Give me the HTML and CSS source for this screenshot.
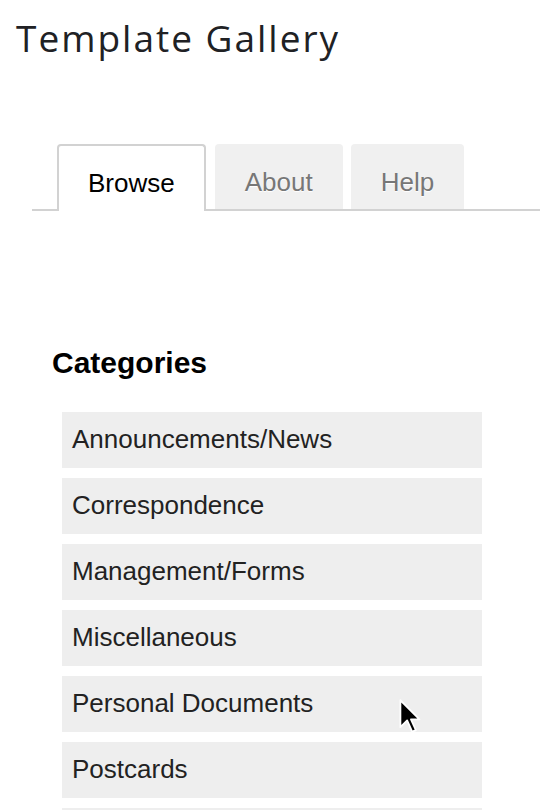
FILE: index.html
```html
<!DOCTYPE html>
<html lang="en">
<head>
    <meta charset="UTF-8">
    <meta name="viewport" content="width=device-width, initial-scale=1.0">
    <title>Template Gallery</title>
    <link rel="stylesheet" href="styles.css">
</head>
<body>
    <div class="page">
        <h1 class="title">Template Gallery</h1>

        <div class="tabs">
            <div class="tab active">Browse</div>
            <div class="tab">About</div>
            <div class="tab">Help</div>
        </div>

        <div class="browse">
            <h2>Categories</h2>
            <ul class="categories">
                <li>Announcements/News</li>
                <li>Correspondence</li>
                <li>Management/Forms</li>
                <li>Miscellaneous</li>
                <li>Personal Documents</li>
                <li>Postcards</li>
                <li></li>
            </ul>
        </div>

        <svg class="cursor" width="25" height="37" viewBox="0 0 22 33">
            <path d="M2 2 V26 L8 20 L12.5 30 L15.8 28.6 L11.4 19 H19 Z" fill="#000" stroke="#fff" stroke-width="1.6" stroke-linejoin="round"/>
        </svg>
    </div>
</body>
</html>
```

FILE: styles.css
```css
body {
    font-family: "Liberation Sans", Arial, sans-serif;
    background-color: #FFFFFF;
    margin: 0;
    overflow: hidden;
}

.page {
    position: relative;
    height: 810px;
    overflow: hidden;
}

.title {
    font-family: "Open Sans", sans-serif;
    font-weight: 400;
    font-size: 37px;
    line-height: 42px;
    letter-spacing: 2px;
    color: #202124;
    margin: 17px 0 0 16px;
}

.tabs {
    display: flex;
    gap: 8px;
    margin: 85px 0 0 32px;
    padding-left: 25px;
    border-bottom: 2px solid #D2D2D2;
    height: 65px;
}

.tab {
    box-sizing: border-box;
    height: 65px;
    padding: 23px 30px 0;
    font-size: 26px;
    line-height: 30px;
    color: #777;
    text-shadow: 0 1px 1px #FFF;
    background: #F0F0F0;
    border-radius: 4px 4px 0 0;
}

.tab.active {
    height: 67px;
    padding: 22px 29px 0;
    color: #000;
    background: #FFF;
    border: 2px solid #D2D2D2;
    border-bottom: none;
    margin-right: 1px;
}

.browse {
    padding-left: 52px;
}

h2 {
    font-size: 30px;
    line-height: 36px;
    font-weight: bold;
    color: #000;
    margin: 134px 0 0;
}

.categories {
    list-style: none;
    margin: 31px 0 0 10px;
    padding: 0;
    width: 420px;
}

.categories li {
    background: #EEEEEE;
    height: 56px;
    box-sizing: border-box;
    padding: 1px 0 3px 10px;
    line-height: 52px;
    font-size: 26px;
    color: #222;
    margin-bottom: 10px;
}

.cursor {
    position: absolute;
    left: 398px;
    top: 698px;
}
```
